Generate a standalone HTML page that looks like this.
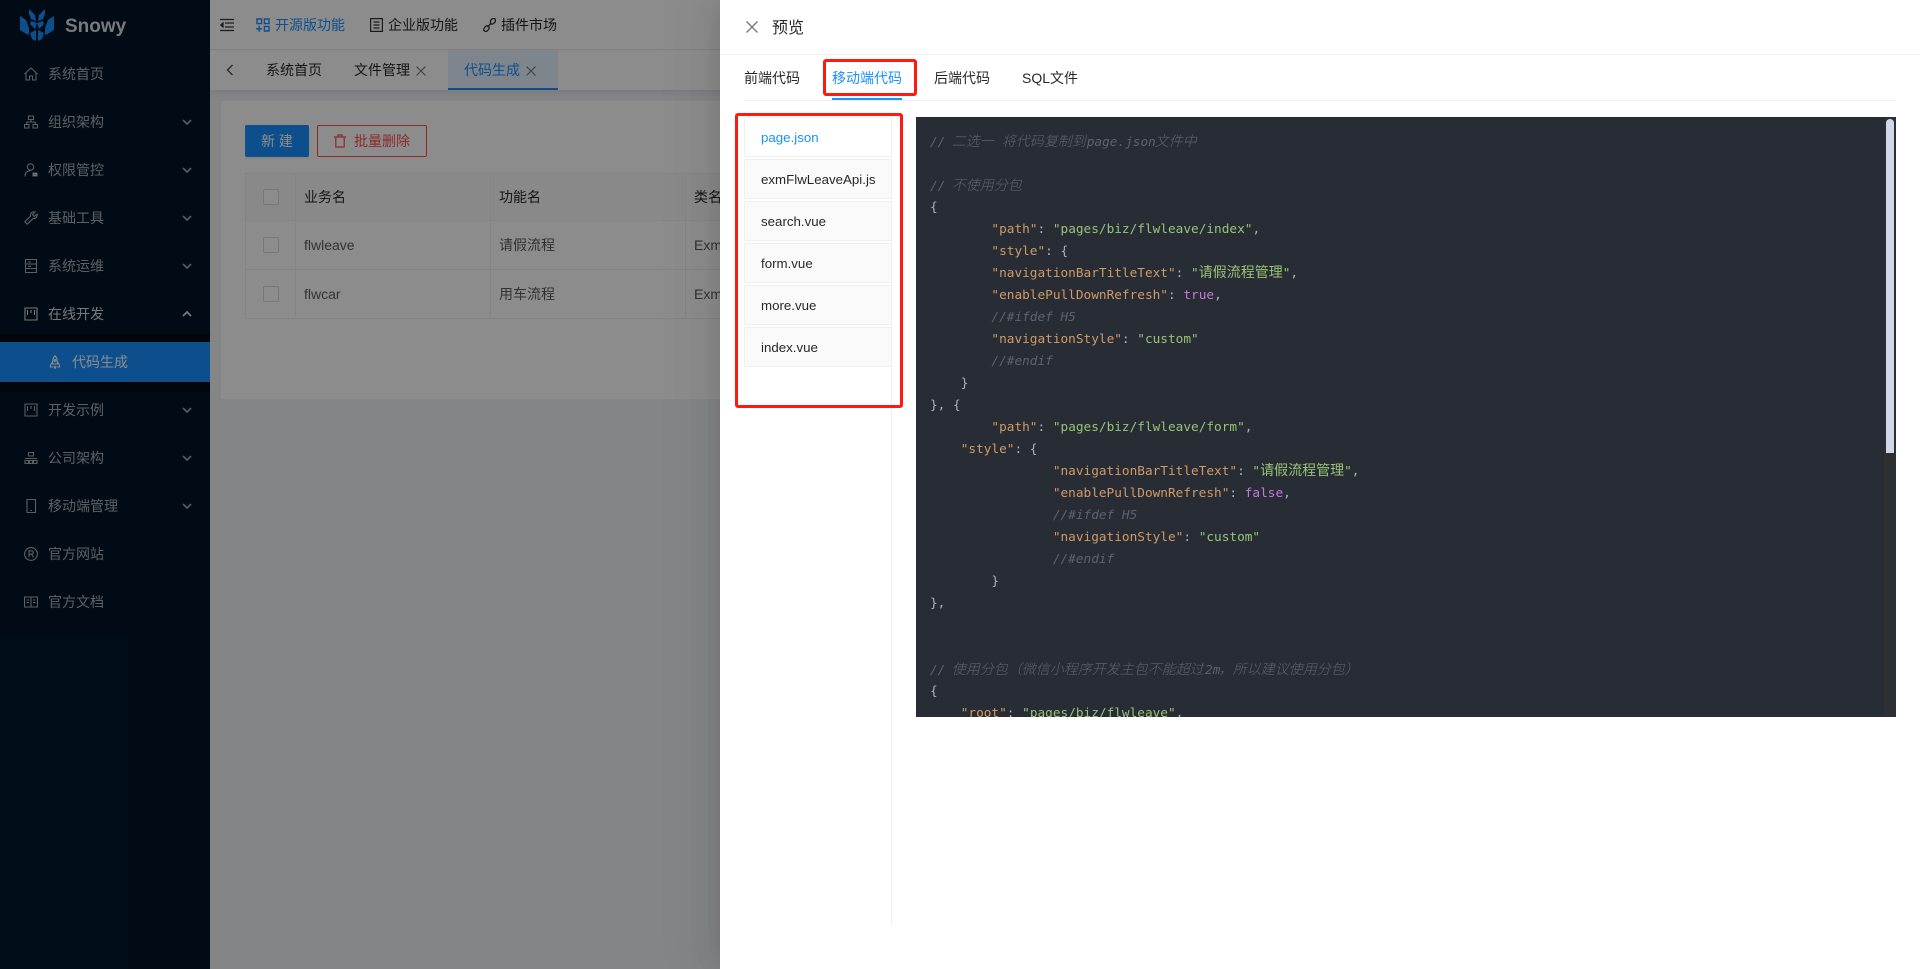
<!DOCTYPE html>
<html lang="zh"><head><meta charset="utf-8"><title>预览</title>
<style>
*{box-sizing:border-box}
html,body{margin:0;padding:0;width:1920px;height:969px;overflow:hidden;background:#f0f2f5;font:14px/22px "Liberation Sans","Noto Sans CJK SC",sans-serif;color:rgba(0,0,0,.85)}
.a{position:absolute;white-space:nowrap}
#side{position:absolute;left:0;top:0;width:210px;height:969px;background:#001529;color:rgba(255,255,255,.65)}
.mi{position:absolute;left:0;width:210px;height:40px;line-height:40px}
.mi span{position:absolute;left:48px}
.mi svg.i{position:absolute;left:24px;top:13px;width:14px;height:14px;fill:none;stroke:rgba(255,255,255,.65);stroke-width:1.1}
.mi svg.ar{position:absolute;left:182px;top:16px;width:10px;height:8px;fill:none;stroke:rgba(255,255,255,.6);stroke-width:1.8}
#ov{position:absolute;left:0;top:0;width:1920px;height:969px;background:rgba(0,0,0,.45)}
#dr{position:absolute;left:720px;top:0;width:1200px;height:969px;background:#fff;box-shadow:-6px 0 16px -8px rgba(0,0,0,.08),-9px 0 28px 0 rgba(0,0,0,.05),-12px 0 48px 16px rgba(0,0,0,.03)}
.vt{position:absolute;left:24px;width:147px;height:40px;line-height:40px;padding-left:16px;background:#fafafa;border:1px solid #f0f0f0;border-right:0;border-radius:2px 0 0 2px;font-size:13.3px}
pre{position:absolute;left:196px;top:117px;width:980px;height:600px;margin:0;padding:14px 14px;background:#282c34;color:#abb2bf;overflow:hidden;font:12.75px/22px "DejaVu Sans Mono","Noto Sans CJK SC",monospace}
pre i{font-style:italic;color:#5c6370}
pre i.line{position:relative;top:1px}
pre b{font-weight:400;color:#d19a66}
pre u{text-decoration:none;color:#98c379}
pre em{font-style:normal;color:#c678dd}
pre s{text-decoration:none;font:14px/0 "Noto Sans CJK SC",sans-serif}
pre i s{display:inline-block;transform:skewX(-14deg);font-weight:300;line-height:1}
.line{display:block;height:22px;overflow:hidden}
svg{display:block}
.tick{position:absolute;left:263px;width:16px;height:16px;border:1px solid #d9d9d9;background:#fff;border-radius:2px}
.hl{position:absolute;background:#e8e8e8}
</style></head><body>

<!-- base page -->
<div class="a" style="left:210px;top:0;width:1710px;height:50px;background:#fff;border-bottom:1px solid #e8e8e8"></div>
<svg class="a" style="left:220px;top:18px" width="14" height="14" viewBox="0 0 14 14" fill="none" stroke="#333" stroke-width="1.200"><path d="M0 1.500H14M5 5H14M5 9H14M0 12.500H14"/><path d="M3 5L.8 7L3 9Z" fill="#333"/></svg>

<svg class="a" style="left:256px;top:18px" width="14" height="14" viewBox="0 0 14 14" fill="none" stroke="#1890ff" stroke-width="1.400"><path d="M1 1h4.600v4.600H1zM8.400 1H13v4.600H8.400zM8.400 8.400H13V13H8.400zM0 10.800h6.200M3.100 7.800v6"/></svg>
<div class="a" style="left:275px;top:14px;color:#1890ff">开源版功能</div>
<svg class="a" style="left:370px;top:18px" width="13" height="14" viewBox="0 0 13 14" fill="none" stroke="#333" stroke-width="1.200"><path d="M.6.6h11.800v12.800H.6zM3.500 4h6M3.500 7h6M3.500 10h6"/></svg>
<div class="a" style="left:388px;top:14px">企业版功能</div>
<svg class="a" style="left:483px;top:18px" width="13" height="14" viewBox="0 0 13 14" fill="none" stroke="#333" stroke-width="1.300"><path d="M7.500 2.500l1.500-1.500a2 2 0 0 1 3 3L10.500 5.500a2 2 0 0 1-3 0zM2.500 8.500L1 10.500a2 2 0 0 0 3 2.500l1.500-1.500a2 2 0 0 0 0-3a2 2 0 0 0-3 0zM4.500 9l4-4"/></svg>
<div class="a" style="left:501px;top:14px">插件市场</div>

<div class="a" style="left:210px;top:50px;width:1710px;height:40px;background:#fff;box-shadow:0 2px 8px rgba(0,0,0,.1);clip-path:inset(0 0 -14px 0)"></div>
<svg class="a" style="left:226px;top:64px" width="8" height="12" viewBox="0 0 8 12" fill="none" stroke="#333" stroke-width="1.200"><path d="M6.500 1L1.500 6l5 5"/></svg>
<div class="a" style="left:266px;top:59px">系统首页</div>
<div class="a" style="left:354px;top:59px">文件管理</div>
<svg class="a" style="left:416px;top:66px" width="10" height="10" viewBox="0 0 10 10" stroke="#777" stroke-width="1.100"><path d="M.5.5l9 9M9.500.5l-9 9"/></svg>
<div class="a" style="left:448px;top:50px;width:110px;height:40px;background:#e6f3ff;border-bottom:2px solid #1890ff"></div>
<div class="a" style="left:464px;top:59px;color:#1890ff">代码生成</div>
<svg class="a" style="left:526px;top:66px" width="10" height="10" viewBox="0 0 10 10" stroke="#777" stroke-width="1.100"><path d="M.5.5l9 9M9.500.5l-9 9"/></svg>

<div class="a" style="left:221px;top:101px;width:1688px;height:298px;background:#fff"></div>
<div class="a" style="left:245px;top:125px;width:64px;height:32px;background:#1890ff;border-radius:2px;color:#fff;text-align:center;line-height:32px;box-shadow:0 2px 0 rgba(0,0,0,.045)">新 建</div>
<div class="a" style="left:317px;top:125px;width:110px;height:32px;border:1px solid #ff4d4f;border-radius:2px;background:#fff"></div>
<svg class="a" style="left:334px;top:134px" width="12" height="14" viewBox="0 0 12 14" fill="none" stroke="#ff4d4f" stroke-width="1.200"><path d="M0 3h12M4 3V1h4v2M1.800 3v10h8.400V3"/></svg>
<div class="a" style="left:354px;top:130px;color:#ff4d4f">批量删除</div>

<div class="a" style="left:245px;top:173px;width:1200px;height:146px;border:1px solid #f0f0f0;background:#fff"></div>
<div class="a" style="left:246px;top:174px;width:1198px;height:46px;background:#fafafa"></div>
<div class="hl" style="left:246px;top:220px;width:1198px;height:1px;background:#f0f0f0"></div>
<div class="hl" style="left:246px;top:269px;width:1198px;height:1px;background:#f0f0f0"></div>
<div class="hl" style="left:295px;top:174px;width:1px;height:144px;background:#f0f0f0"></div>
<div class="hl" style="left:490px;top:174px;width:1px;height:144px;background:#f0f0f0"></div>
<div class="hl" style="left:685px;top:174px;width:1px;height:144px;background:#f0f0f0"></div>
<div class="tick" style="top:189px"></div><div class="tick" style="top:237px"></div><div class="tick" style="top:286px"></div>
<div class="a" style="left:304px;top:186px">业务名</div><div class="a" style="left:499px;top:186px">功能名</div><div class="a" style="left:694px;top:186px">类名</div>
<div class="a" style="left:304px;top:234px;color:rgba(0,0,0,.65)">flwleave</div><div class="a" style="left:499px;top:234px;color:rgba(0,0,0,.65)">请假流程</div><div class="a" style="left:694px;top:234px;color:rgba(0,0,0,.65)">Exm</div>
<div class="a" style="left:304px;top:283px;color:rgba(0,0,0,.65)">flwcar</div><div class="a" style="left:499px;top:283px;color:rgba(0,0,0,.65)">用车流程</div><div class="a" style="left:694px;top:283px;color:rgba(0,0,0,.65)">Exm</div>

<!-- sidebar -->
<div id="side">
<svg class="a" style="left:20px;top:8px" width="35" height="33" viewBox="0 0 35 33" fill="#1890ff"><path d="M0 8l6 4 3 8v6l-1 1-8-5zM34 8l-6 4-3 8v6l1 1 8-5zM9 1l6 6 1 6-5-2-2-5zM25 1l-6 6-1 6 5-2 2-5zM17 15l-6-2-1 3 5 5zM17 15l6-2 1 3-5 5zM10 25l6-3v11l-4-2zM24 25l-6-3v11l4-2z"/></svg>
<div class="a" style="left:65px;top:14px;font:700 19px/26px 'Liberation Sans',sans-serif;color:rgba(255,255,255,.85)">Snowy</div>

<div class="mi" style="top:54px"><svg class="i" viewBox="0 0 14 14"><path d="M.5 7L7 1l6.500 6M2 6v7h3.500V9h3v4H12V6"/></svg><span>系统首页</span></div>
<div class="mi" style="top:102px"><svg class="i" viewBox="0 0 14 14"><path d="M4.500 1h5v3.500h-5zM.5 9.500h4.500V13H.5zM9 9.500h4.500V13H9zM7 4.500V7M2.800 9.500V7h8.400v2.500"/></svg><span>组织架构</span><svg class="ar" viewBox="0 0 10 8"><path d="M1 2l4 4 4-4"/></svg></div>
<div class="mi" style="top:150px"><svg class="i" viewBox="0 0 14 14"><circle cx="6.500" cy="4" r="3.200"/><path d="M1 13.500c0-3.500 2-5.800 5.500-5.800"/><path d="M9 10h4v3H9z" fill="rgba(255,255,255,.65)"/></svg><span>权限管控</span><svg class="ar" viewBox="0 0 10 8"><path d="M1 2l4 4 4-4"/></svg></div>
<div class="mi" style="top:198px"><svg class="i" viewBox="0 0 14 14"><path d="M13 3l-2.500 2.500L8.500 3.500 11 1C8.500.2 6 2 6.500 5L.8 10.700l2.500 2.500L9 7.500c3 .5 4.800-2 4-4.500z"/></svg><span>基础工具</span><svg class="ar" viewBox="0 0 10 8"><path d="M1 2l4 4 4-4"/></svg></div>
<div class="mi" style="top:246px"><svg class="i" viewBox="0 0 14 14"><path d="M1.500.5h11v13h-11zM1.500 5h11M1.500 9.500h11M4 3h3M4 7.300h3"/></svg><span>系统运维</span><svg class="ar" viewBox="0 0 10 8"><path d="M1 2l4 4 4-4"/></svg></div>
<div class="mi" style="top:294px;color:rgba(255,255,255,.85)"><svg class="i" viewBox="0 0 14 14" style="stroke:rgba(255,255,255,.85)"><path d="M1 1h12v12H1zM3.500 3v5M7 3v3M10.500 3v5"/></svg><span>在线开发</span><svg class="ar" viewBox="0 0 10 8" style="stroke:rgba(255,255,255,.85)"><path d="M1 6l4-4 4 4"/></svg></div>
<div class="a" style="left:0;top:334px;width:210px;height:58px;background:#000c17"></div>
<div class="a" style="left:0;top:342px;width:210px;height:40px;background:#1890ff;color:#fff;line-height:40px"><svg class="a" style="left:48px;top:13px" width="14" height="14" viewBox="0 0 14 14" fill="none" stroke="#fff" stroke-width="1.100"><path d="M7 .8C5 2.500 4.500 5 4.500 9h5C9.500 5 9 2.500 7 .8zM4.500 7L2.500 10v2h2.500M9.500 7l2 3v2H9M6 11l1 2.500L8 11"/><circle cx="7" cy="5.500" r=".9"/></svg><span class="a" style="left:72px">代码生成</span></div>
<div class="mi" style="top:390px"><svg class="i" viewBox="0 0 14 14"><path d="M1 1h12v12H1zM3.500 3v5M7 3v3M10.500 3v5"/></svg><span>开发示例</span><svg class="ar" viewBox="0 0 10 8"><path d="M1 2l4 4 4-4"/></svg></div>
<div class="mi" style="top:438px"><svg class="i" viewBox="0 0 14 14"><path d="M4.500 1.500h5v3.500h-5zM1 9.500h3.500v3H1zM5.500 9.500H8.500v3h-3zM9.500 9.500H13v3H9.500zM1 7.500h12"/></svg><span>公司架构</span><svg class="ar" viewBox="0 0 10 8"><path d="M1 2l4 4 4-4"/></svg></div>
<div class="mi" style="top:486px"><svg class="i" viewBox="0 0 14 14"><path d="M3 .5h8.500v13H3zM6.500 11.500h1.500"/></svg><span>移动端管理</span><svg class="ar" viewBox="0 0 10 8"><path d="M1 2l4 4 4-4"/></svg></div>
<div class="mi" style="top:534px"><svg class="i" viewBox="0 0 14 14"><circle cx="7" cy="7" r="6.400"/><path d="M5 10.300V3.800h2.500a1.700 1.700 0 0 1 0 3.400H5M7.500 7.200L9.500 10.300"/></svg><span>官方网站</span></div>
<div class="mi" style="top:582px"><svg class="i" viewBox="0 0 14 14"><path d="M.5 2h13v10H.5zM7 2v10M2.500 5H5M2.500 7.500H5M9 5h2.500M9 7.500h2.500"/></svg><span>官方文档</span></div>
</div>

<div id="ov"></div>

<!-- drawer -->
<div id="dr">
<svg class="a" style="left:26px;top:21px" width="12" height="12" viewBox="0 0 12 12" stroke="#777" stroke-width="1.300"><path d="M.5.5l11 11M11.500.5l-11 11"/></svg>
<div class="a" style="left:52px;top:17px;font-size:16px;line-height:24px">预览</div>
<div class="a" style="left:0;top:54px;width:1200px;height:1px;background:#f0f0f0"></div>

<div class="a" style="left:24px;top:67px">前端代码</div>
<div class="a" style="left:112px;top:67px;color:#1890ff">移动端代码</div>
<div class="a" style="left:214px;top:67px">后端代码</div>
<div class="a" style="left:302px;top:67px">SQL文件</div>
<div class="a" style="left:24px;top:100px;width:1152px;height:1px;background:#f0f0f0"></div>
<div class="a" style="left:112px;top:98px;width:70px;height:2px;background:#1890ff"></div>

<div class="a" style="left:171px;top:117px;width:1px;height:808px;background:#f0f0f0"></div>
<div class="vt" style="top:117px;background:#fff;color:#1890ff">page.json</div>
<div class="vt" style="top:159px">exmFlwLeaveApi.js</div>
<div class="vt" style="top:201px">search.vue</div>
<div class="vt" style="top:243px">form.vue</div>
<div class="vt" style="top:285px">more.vue</div>
<div class="vt" style="top:327px">index.vue</div>

<pre><i class="line">// <s>二选一</s> <s>将代码复制到</s>page.json<s>文件中</s></i><span class="line"></span><i class="line">// <s>不使用分包</s></i><span class="line">{</span><span class="line">        <b>"path"</b>: <u>"pages/biz/flwleave/index"</u>,</span><span class="line">        <b>"style"</b>: {</span><span class="line">        <b>"navigationBarTitleText"</b>: <u>"<s>请假流程管理</s>"</u>,</span><span class="line">        <b>"enablePullDownRefresh"</b>: <em>true</em>,</span><span class="line">        <i>//#ifdef H5</i></span><span class="line">        <b>"navigationStyle"</b>: <u>"custom"</u></span><span class="line">        <i>//#endif</i></span><span class="line">    }</span><span class="line">}, {</span><span class="line">        <b>"path"</b>: <u>"pages/biz/flwleave/form"</u>,</span><span class="line">    <b>"style"</b>: {</span><span class="line">                <b>"navigationBarTitleText"</b>: <u>"<s>请假流程管理</s>"</u>,</span><span class="line">                <b>"enablePullDownRefresh"</b>: <em>false</em>,</span><span class="line">                <i>//#ifdef H5</i></span><span class="line">                <b>"navigationStyle"</b>: <u>"custom"</u></span><span class="line">                <i>//#endif</i></span><span class="line">        }</span><span class="line">},</span><span class="line"></span><span class="line"></span><i class="line">// <s>使用分包（微信小程序开发主包不能超过</s>2m<s>，所以建议使用分包）</s></i><span class="line">{</span><span class="line">    <b>"root"</b>: <u>"pages/biz/flwleave"</u>,</span></pre>
<div class="a" style="left:1164px;top:117px;width:12px;height:600px;background:#2e2f33"></div>
<div class="a" style="left:1166px;top:119px;width:8px;height:334px;background:#d0d7e6;border-radius:4px 4px 0 0"></div>

<!-- red annotations -->
<div class="a" style="left:103px;top:59px;width:94px;height:37px;border:3px solid #ff1a10;border-radius:3px"></div>
<div class="a" style="left:15px;top:113px;width:168px;height:295px;border:3px solid #ff1a10;border-radius:3px"></div>
</div>
</body></html>
